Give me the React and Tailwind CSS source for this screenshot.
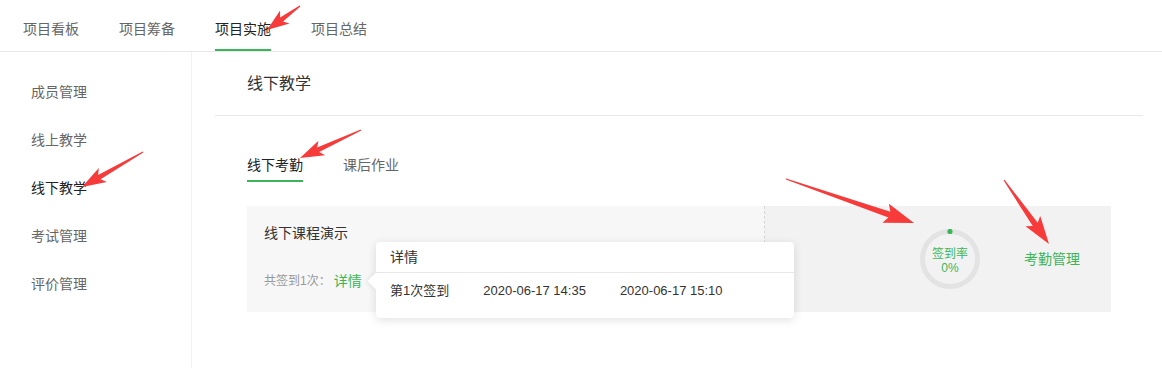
import React from "react";

const topTabs = ["项目看板", "项目筹备", "项目实施", "项目总结"];
const sideItems = ["成员管理", "线上教学", "线下教学", "考试管理", "评价管理"];

// red annotation arrow, tail -> tip
function Arrow({ x1, y1, x2, y2, head = 22, wing = 9, shaft = 2.5 }) {
    const dx = x2 - x1;
    const dy = y2 - y1;
    const len = Math.hypot(dx, dy);
    const ux = dx / len;
    const uy = dy / len;
    const nx = -uy;
    const ny = ux;
    const pt = (a, b) => `${x1 + ux * a + nx * b},${y1 + uy * a + ny * b}`;
    const points = [
        pt(0, 0.6),
        pt(len - head, shaft),
        pt(len - head - 4, wing),
        pt(len, 0),
        pt(len - head - 4, -wing),
        pt(len - head, -shaft),
        pt(0, -0.6),
    ].join(" ");
    return <polygon points={points} fill="#f73a3a" />;
}

function RateRing() {
    return (
        <div className="relative w-[60px] h-[60px]">
            <svg width="60" height="60" viewBox="0 0 60 60" className="absolute inset-0">
                <circle cx="30" cy="30" r="27.5" fill="none" stroke="#e3e3e3" strokeWidth="5" />
                <circle cx="30" cy="2.5" r="2.6" fill="#3cb55a" />
            </svg>
            <div className="absolute inset-0 pt-[3px] flex flex-col items-center justify-center text-[12px] leading-[14px] text-[#3cb55a]">
                <span>签到率</span>
                <span>0%</span>
            </div>
        </div>
    );
}

export default function App() {
    return (
        <div
            className="relative w-[1162px] h-[368px] overflow-hidden bg-white text-[#333]"
            style={{ fontFamily: '"Liberation Sans", "Noto Sans CJK SC", sans-serif' }}
        >
            {/* top tabs */}
            <div className="h-[52px] border-b border-[#e8e8e8] flex pl-[23px] gap-[40px]">
                {topTabs.map((t, i) => (
                    <div key={t} className="relative pt-[19px] text-[14px] leading-[20px]">
                        <span className={i === 2 ? "text-[#222]" : "text-[#666]"}>{t}</span>
                        {i === 2 && <div className="absolute left-0 right-0 bottom-0 h-[2px] bg-[#3cb55a]" />}
                    </div>
                ))}
            </div>

            <div className="flex h-[316px]">
                {/* sidebar */}
                <div className="w-[192px] border-r border-[#f2f2f2] pt-[16px]">
                    {sideItems.map((s, i) => (
                        <div
                            key={s}
                            className={`h-[48px] flex items-center pl-[31px] text-[14px] ${i === 2 ? "text-[#222]" : "text-[#666]"}`}
                        >
                            {s}
                        </div>
                    ))}
                </div>

                {/* main */}
                <div className="flex-1 flex flex-col">
                    <div className="ml-[23px] mr-[19px] h-[64px] border-b border-[#e8e8e8] pl-[32px] flex items-center text-[16px] text-[#333]">
                        线下教学
                    </div>

                    <div className="pl-[55px] pt-[39px] flex gap-[40px] text-[14px] leading-[20px]">
                        <div className="flex flex-col">
                            <span className="text-[#222]">线下考勤</span>
                            <div className="mt-[5px] h-[2px] bg-[#3cb55a]" />
                        </div>
                        <div className="flex flex-col">
                            <span className="text-[#666]">课后作业</span>
                            <div className="mt-[5px] h-[2px]" />
                        </div>
                    </div>

                    {/* attendance card */}
                    <div className="relative ml-[55px] mt-[24px] w-[864px] h-[106px] flex">
                        <div className="w-[518px] bg-[#f7f7f7] border-r border-dashed border-[#d6d6d6] pl-[17px] pt-[17px]">
                            <div className="text-[14px] leading-[20px] text-[#333]">线下课程演示</div>
                            <div className="mt-[28px] flex items-center leading-[20px]">
                                <span className="text-[12px] text-[#999]">共签到1次：</span>
                                <span className="ml-[3px] text-[14px] text-[#3cb55a]">详情</span>
                            </div>
                        </div>
                        <div className="flex-1 bg-[#f2f2f2] flex items-center justify-end pr-[31px] gap-[44px]">
                            <RateRing />
                            <span className="text-[14px] text-[#3cb55a]">考勤管理</span>
                        </div>

                        {/* details popover */}
                        <div className="absolute left-[129px] top-[36px] w-[418px] h-[76px] bg-white rounded-[4px] shadow-[0_2px_10px_rgba(0,0,0,0.12)]">
                            <div className="absolute left-[-6px] top-[33px] w-[12px] h-[12px] rotate-45 bg-white shadow-[-2px_2px_4px_rgba(0,0,0,0.05)]" />
                            <div className="relative h-[31px] px-[14px] flex items-center border-b border-[#e8e8e8] text-[14px] text-[#333]">
                                详情
                            </div>
                            <div className="relative px-[14px] pt-[8px] flex gap-[34px] text-[13px] leading-[20px] text-[#333]">
                                <span>第1次签到</span>
                                <span>2020-06-17 14:35</span>
                                <span>2020-06-17 15:10</span>
                            </div>
                        </div>
                    </div>
                </div>
            </div>

            {/* annotation arrows */}
            <svg className="absolute inset-0 pointer-events-none" width="1162" height="368">
                <Arrow x1={300} y1={6} x2={267} y2={30} head={18} wing={8} />
                <Arrow x1={143} y1={152} x2={82} y2={187} head={20} wing={8} />
                <Arrow x1={361} y1={130} x2={300} y2={158} head={20} wing={8} />
                <Arrow x1={786} y1={179} x2={914} y2={223} head={26} wing={10} shaft={3} />
                <Arrow x1={1004} y1={180} x2={1049} y2={244} head={24} wing={9} shaft={3} />
            </svg>
        </div>
    );
}
